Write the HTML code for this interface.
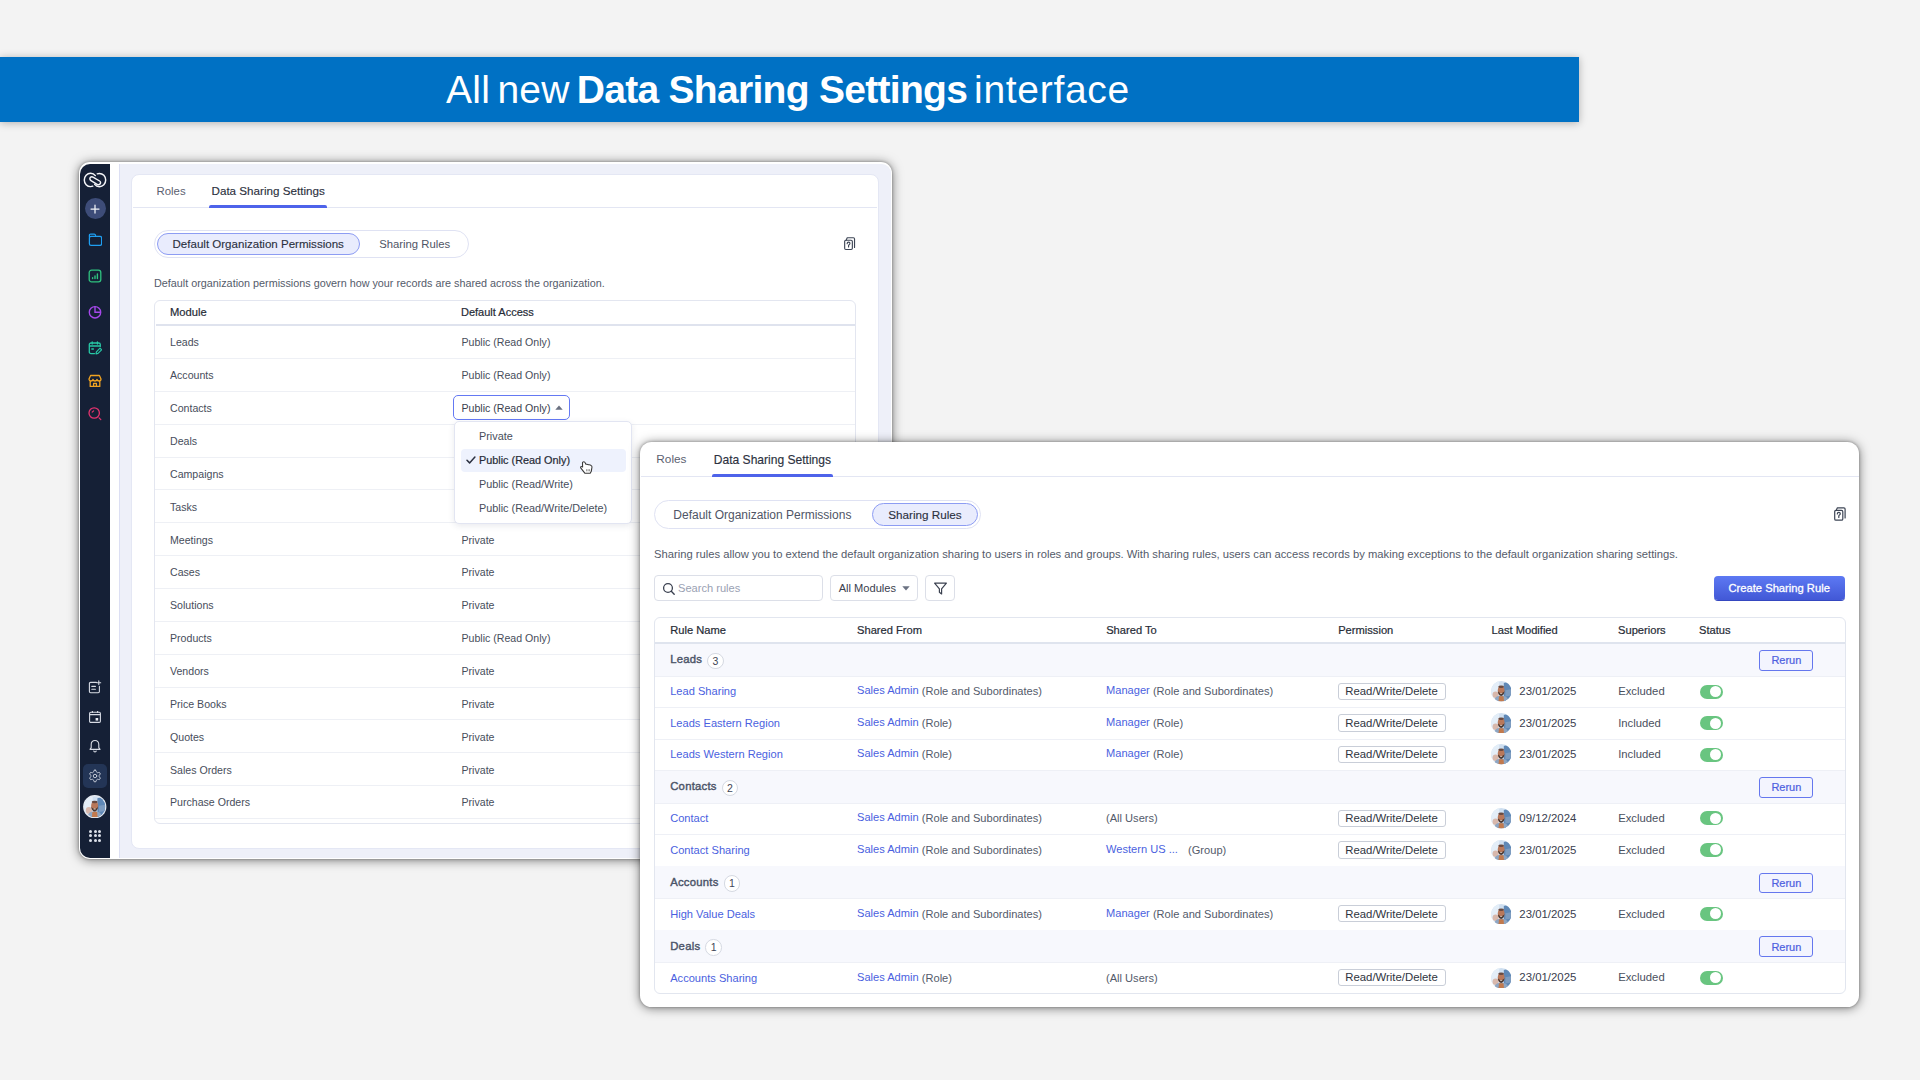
<!DOCTYPE html>
<html><head><meta charset="utf-8"><title>Data Sharing Settings</title>
<style>
html,body{margin:0;padding:0;}
body{width:1920px;height:1080px;overflow:hidden;background:#f3f3f3;position:relative;font-family:"Liberation Sans", sans-serif;}
.t{position:absolute;white-space:nowrap;line-height:1;font-family:"Liberation Sans", sans-serif;}
.b{position:absolute;}
.lk{color:#4a5fe0;position:relative;top:-1px;}
.badge{display:inline-block;box-sizing:border-box;width:16.5px;height:16.5px;border:1px solid #d5d9e2;border-radius:50%;text-align:center;line-height:15.5px;font-size:10.5px;color:#3f4656;-webkit-text-stroke:0;margin:-5px 0 -5px 5px;vertical-align:-1.5px;background:#fff;}
.av{border-radius:50%;background:radial-gradient(circle at 50% 46%, #6b4a36 0 17%, #a0704f 18% 26%, transparent 27%), radial-gradient(ellipse at 50% 95%, #d9d4cf 0 28%, transparent 30%), linear-gradient(135deg,#c7d6e6,#7f9bbb 60%,#e0e6ee);box-shadow:inset 0 0 0 1px rgba(255,255,255,0.35);}
</style></head><body>
<svg width="0" height="0" style="position:absolute"><defs><clipPath id="avc"><circle cx="10" cy="10" r="10"/></clipPath><symbol id="avs" viewBox="0 0 20 20"><g clip-path="url(#avc)"><rect width="20" height="20" fill="#cfdff0"/><rect x="0" y="0" width="8" height="20" fill="#e4eef8"/><path d="M12.5 2 L20 0 V20 H12.5 Z" fill="#5f88b6"/><path d="M14 9 L20 8 V14 L14 15 Z" fill="#7d9cc0"/><ellipse cx="4.5" cy="13.5" rx="3" ry="3.2" fill="#d8b8ac"/><path d="M3 20 C3.5 15.5 6.5 14.5 10 14.5 C13.5 14.5 16.5 15.5 17 20 Z" fill="#8fa6c2"/><path d="M7.3 20 L7.8 14.8 H12.2 L12.7 20 Z" fill="#c27a4e"/><ellipse cx="9.9" cy="9.3" rx="3.3" ry="4.2" fill="#b9785a"/><path d="M6.7 9.8 C7 13 8.3 14.6 9.9 14.6 C11.5 14.6 12.8 13 13.1 9.8 C12.3 11.3 11.3 11.8 9.9 11.8 C8.5 11.8 7.5 11.3 6.7 9.8 Z" fill="#4b3933"/><ellipse cx="9.9" cy="5.6" rx="2.8" ry="1.2" fill="#6a4a40"/><rect x="8.8" y="11.6" width="2.2" height="0.9" rx="0.4" fill="#e8d8cc"/></g></symbol></defs></svg>
<div class="b" style="left:0.00px;top:57.20px;width:1578.50px;height:64.90px;background:#0071c4;box-shadow:0 1px 8px rgba(0,0,0,0.28);"></div>
<div class="t" style="left:446px;top:70.48px;font-size:39px;color:#fff;word-spacing:-4px"><span style="letter-spacing:0.3px">All new</span> <b style="letter-spacing:-0.7px;word-spacing:0">Data Sharing Settings</b> <span style="letter-spacing:0.7px">interface</span></div>
<div class="b" style="left:78.90px;top:162.40px;width:812.80px;height:696.50px;background:#fff;border-radius:11px;box-shadow:0 0 3px rgba(0,0,0,0.32), 0 1px 11px rgba(0,0,0,0.52);"></div>
<div class="b" style="left:80.20px;top:163.80px;width:29.80px;height:694.00px;background:#152036;border-radius:10px 0 0 10px;"></div>
<div class="b" style="left:119.00px;top:164.20px;width:771.40px;height:693.40px;background:#eef0f9;border-left:1px solid #dcdff3;border-radius:0 9px 9px 0;"></div>
<div class="b" style="left:131.00px;top:173.60px;width:748.00px;height:675.40px;background:#fff;border:1px solid #e4e7f4;border-radius:8px;box-sizing:border-box;"></div>
<div class="t" style="left:156.50px;top:185.65px;font-size:11.4px;color:#5b6170;">Roles</div>
<div class="t" style="left:211.50px;top:185.44px;font-size:11.65px;color:#2c3140;-webkit-text-stroke:0.15px #2c3140;">Data Sharing Settings</div>
<div class="b" style="left:132.50px;top:206.80px;width:744.80px;height:1.00px;background:#e3e6f3;"></div>
<div class="b" style="left:209.00px;top:205.20px;width:117.50px;height:2.80px;background:#4e63ea;border-radius:2px 2px 0 0;"></div>
<div class="b" style="left:154.00px;top:230.30px;width:314.70px;height:27.50px;border:1px solid #dfe2f3;border-radius:14px;box-sizing:border-box;background:#fff;"></div>
<div class="b" style="left:157.00px;top:232.80px;width:202.80px;height:22.10px;border:1px solid #8d9cf3;border-radius:12px;box-sizing:border-box;background:#e9ecfd;"></div>
<div class="t" style="left:172.50px;top:238.82px;font-size:11.55px;color:#2b3040;-webkit-text-stroke:0.12px #2b3040;">Default Organization Permissions</div>
<div class="t" style="left:379.20px;top:239.03px;font-size:11.3px;color:#4f5566;">Sharing Rules</div>
<svg class="b" style="left:844.3px;top:237.4px;width:11.399999999999999px;height:13.299999999999999px" viewBox="0 0 12 14"><g fill="none" stroke="#3d4555" stroke-width="1.2" stroke-linecap="round" stroke-linejoin="round"><rect x="0.7" y="3.4" width="8.1" height="9.8" rx="1.3"/><path d="M2.2 3.3 L3.4 0.8 H9.9 Q11.1 0.8 11.1 2 V11"/><path d="M3.3 7 Q3.3 5.4 4.8 5.4 Q6.3 5.4 6.3 6.7 Q6.3 7.6 5.4 8.1 Q4.8 8.5 4.8 9.3 V10.4"/></g></svg>
<div class="t" style="left:154.00px;top:277.66px;font-size:10.8px;color:#545b6a;">Default organization permissions govern how your records are shared across the organization.</div>
<div class="b" style="left:154.00px;top:300.00px;width:702.00px;height:523.80px;border:1px solid #e3e6f0;border-radius:6px;box-sizing:border-box;background:#fff;"></div>
<div class="t" style="left:170.00px;top:306.52px;font-size:11.2px;color:#262b36;-webkit-text-stroke:0.2px #262b36;">Module</div>
<div class="t" style="left:461.00px;top:306.69px;font-size:11.0px;color:#262b36;-webkit-text-stroke:0.2px #262b36;">Default Access</div>
<div class="b" style="left:155.50px;top:324.20px;width:699.20px;height:1.70px;background:#dfe3ee;"></div>
<div class="b" style="left:155.00px;top:357.96px;width:700.00px;height:1.00px;background:#eef0f5;"></div>
<div class="t" style="left:170.00px;top:337.45px;font-size:10.6px;color:#474d5b;">Leads</div>
<div class="t" style="left:461.50px;top:337.45px;font-size:10.6px;color:#474d5b;">Public (Read Only)</div>
<div class="b" style="left:155.00px;top:390.82px;width:700.00px;height:1.00px;background:#eef0f5;"></div>
<div class="t" style="left:170.00px;top:370.31px;font-size:10.6px;color:#474d5b;">Accounts</div>
<div class="t" style="left:461.50px;top:370.31px;font-size:10.6px;color:#474d5b;">Public (Read Only)</div>
<div class="b" style="left:155.00px;top:423.68px;width:700.00px;height:1.00px;background:#eef0f5;"></div>
<div class="t" style="left:170.00px;top:403.17px;font-size:10.6px;color:#474d5b;">Contacts</div>
<div class="b" style="left:155.00px;top:456.54px;width:700.00px;height:1.00px;background:#eef0f5;"></div>
<div class="t" style="left:170.00px;top:436.03px;font-size:10.6px;color:#474d5b;">Deals</div>
<div class="b" style="left:155.00px;top:489.40px;width:700.00px;height:1.00px;background:#eef0f5;"></div>
<div class="t" style="left:170.00px;top:468.89px;font-size:10.6px;color:#474d5b;">Campaigns</div>
<div class="b" style="left:155.00px;top:522.26px;width:700.00px;height:1.00px;background:#eef0f5;"></div>
<div class="t" style="left:170.00px;top:501.75px;font-size:10.6px;color:#474d5b;">Tasks</div>
<div class="b" style="left:155.00px;top:555.12px;width:700.00px;height:1.00px;background:#eef0f5;"></div>
<div class="t" style="left:170.00px;top:534.61px;font-size:10.6px;color:#474d5b;">Meetings</div>
<div class="t" style="left:461.50px;top:534.61px;font-size:10.6px;color:#474d5b;">Private</div>
<div class="b" style="left:155.00px;top:587.98px;width:700.00px;height:1.00px;background:#eef0f5;"></div>
<div class="t" style="left:170.00px;top:567.47px;font-size:10.6px;color:#474d5b;">Cases</div>
<div class="t" style="left:461.50px;top:567.47px;font-size:10.6px;color:#474d5b;">Private</div>
<div class="b" style="left:155.00px;top:620.84px;width:700.00px;height:1.00px;background:#eef0f5;"></div>
<div class="t" style="left:170.00px;top:600.33px;font-size:10.6px;color:#474d5b;">Solutions</div>
<div class="t" style="left:461.50px;top:600.33px;font-size:10.6px;color:#474d5b;">Private</div>
<div class="b" style="left:155.00px;top:653.70px;width:700.00px;height:1.00px;background:#eef0f5;"></div>
<div class="t" style="left:170.00px;top:633.19px;font-size:10.6px;color:#474d5b;">Products</div>
<div class="t" style="left:461.50px;top:633.19px;font-size:10.6px;color:#474d5b;">Public (Read Only)</div>
<div class="b" style="left:155.00px;top:686.56px;width:700.00px;height:1.00px;background:#eef0f5;"></div>
<div class="t" style="left:170.00px;top:666.05px;font-size:10.6px;color:#474d5b;">Vendors</div>
<div class="t" style="left:461.50px;top:666.05px;font-size:10.6px;color:#474d5b;">Private</div>
<div class="b" style="left:155.00px;top:719.42px;width:700.00px;height:1.00px;background:#eef0f5;"></div>
<div class="t" style="left:170.00px;top:698.91px;font-size:10.6px;color:#474d5b;">Price Books</div>
<div class="t" style="left:461.50px;top:698.91px;font-size:10.6px;color:#474d5b;">Private</div>
<div class="b" style="left:155.00px;top:752.28px;width:700.00px;height:1.00px;background:#eef0f5;"></div>
<div class="t" style="left:170.00px;top:731.77px;font-size:10.6px;color:#474d5b;">Quotes</div>
<div class="t" style="left:461.50px;top:731.77px;font-size:10.6px;color:#474d5b;">Private</div>
<div class="b" style="left:155.00px;top:785.14px;width:700.00px;height:1.00px;background:#eef0f5;"></div>
<div class="t" style="left:170.00px;top:764.63px;font-size:10.6px;color:#474d5b;">Sales Orders</div>
<div class="t" style="left:461.50px;top:764.63px;font-size:10.6px;color:#474d5b;">Private</div>
<div class="b" style="left:155.00px;top:818.00px;width:700.00px;height:1.00px;background:#eef0f5;"></div>
<div class="t" style="left:170.00px;top:797.49px;font-size:10.6px;color:#474d5b;">Purchase Orders</div>
<div class="t" style="left:461.50px;top:797.49px;font-size:10.6px;color:#474d5b;">Private</div>
<div class="b" style="left:453.40px;top:395.40px;width:116.60px;height:25.00px;border:1.5px solid #6479f3;border-radius:5px;box-sizing:border-box;background:#fff;"></div>
<div class="t" style="left:461.50px;top:403.02px;font-size:10.6px;color:#3a404e;">Public (Read Only)</div>
<svg class="b" style="left:554.5px;top:404.6px;width:8px;height:5px" viewBox="0 0 8 5"><path d="M0.3 4.7 L4 0.5 L7.7 4.7 Z" fill="#6a7080"/></svg>
<div class="b" style="left:453.90px;top:420.60px;width:178.60px;height:103.60px;border:1px solid #e2e5f2;border-radius:5px;box-sizing:border-box;background:#fff;box-shadow:0 2px 6px rgba(40,50,90,0.10);"></div>
<div class="t" style="left:479.00px;top:430.81px;font-size:10.85px;color:#474d5b;">Private</div>
<div class="b" style="left:460.50px;top:448.60px;width:165.30px;height:23.50px;background:#eef2fd;border-radius:4px;"></div>
<svg class="b" style="left:465.5px;top:456px;width:10px;height:8px" viewBox="0 0 10 8"><path d="M1 4.3 L3.6 6.9 L8.9 1" fill="none" stroke="#2b3040" stroke-width="1.5" stroke-linecap="round" stroke-linejoin="round"/></svg>
<div class="t" style="left:479.00px;top:455.11px;font-size:10.85px;color:#262b36;-webkit-text-stroke:0.2px #262b36;">Public (Read Only)</div>
<div class="t" style="left:479.00px;top:478.81px;font-size:10.85px;color:#474d5b;">Public (Read/Write)</div>
<div class="t" style="left:479.00px;top:502.81px;font-size:10.85px;color:#474d5b;">Public (Read/Write/Delete)</div>
<svg class="b" style="left:579.8px;top:460.5px;width:13px;height:13px" viewBox="0 0 13 13"><path d="M3.8 0.7 C4.5 0.7 5 1.2 5.3 2 L5.9 3.3 C7 3.1 8 3.3 8.6 3.8 C9.6 3.7 10.6 4 11.3 4.6 C11.9 5 12 5.6 11.9 6.4 L11.3 10.3 L10.2 12.2 H4.8 L0.9 7.1 C0.4 6.5 0.6 5.6 1.3 5.5 C1.8 5.4 2.2 5.6 2.6 6 L2.5 2 C2.5 1.2 3 0.7 3.8 0.7 Z" fill="#fff" stroke="#3a3a3a" stroke-width="1.1" stroke-linejoin="round"/><path d="M6.6 8.2 V10.3 M8.1 8.2 V10.3 M9.6 8.2 V10.3" stroke="#777" stroke-width="0.8"/></svg>
<svg class="b" style="left:83px;top:172px;width:24px;height:16px" viewBox="0 0 24 16"><g fill="none" stroke="#f4f5f8" stroke-width="1.45" stroke-linecap="round"><path d="M12.3 3.6 C11.2 2.1 9.5 1.3 7.6 1.3 C4.1 1.3 1.3 4.2 1.3 7.9 C1.3 11.6 4.1 14.6 7.6 14.6 C8.4 14.6 9.1 14.5 9.8 14.2"/><path d="M11.7 12.4 C12.8 13.9 14.5 14.7 16.4 14.7 C19.9 14.7 22.7 11.8 22.7 8.1 C22.7 4.4 19.9 1.4 16.4 1.4 C15.6 1.4 14.9 1.5 14.2 1.8"/><path d="M7.2 5.6 C8 4.8 9.4 4.7 10.4 5.3 L16.6 9 C17.6 9.6 17.9 10.9 17.2 11.8 C16.5 12.7 15.1 12.9 14.1 12.3 L8 8.6 C7 8 6.5 6.5 7.2 5.6 Z"/></g></svg>
<div class="b" style="left:84.8px;top:198.4px;width:20.8px;height:20.8px;border-radius:50%;background:#3d4c78;"></div>
<svg class="b" style="left:89.2px;top:203px;width:12px;height:12px" viewBox="0 0 12 12"><path d="M6 2 V10 M2 6 H10" stroke="#f2f4f8" stroke-width="1.25" stroke-linecap="round"/></svg>
<svg class="b" style="left:88px;top:233px;width:14px;height:14px" viewBox="0 0 14 14"><g fill="none" stroke="#1f9ff2" stroke-width="1.25" stroke-linejoin="round"><rect x="1.4" y="3.4" width="12.2" height="9" rx="1.6"/><path d="M1.4 4.6 V2.4 C1.4 1.6 1.8 1.1 2.6 1.1 H6.4 C7.1 1.1 7.6 1.6 7.7 3.4"/></g></svg>
<svg class="b" style="left:88.0px;top:269.0px;width:14px;height:14px" viewBox="0 0 14 14"><rect x="1.2" y="1.2" width="11.6" height="11.6" rx="2.4" fill="none" stroke="#2fc27f" stroke-width="1.3"/><path d="M4.6 9.6 V8.8 M7 9.6 V7 M9.4 9.6 V5" stroke="#2fc27f" stroke-width="1.4" stroke-linecap="round"/></svg>
<svg class="b" style="left:88.0px;top:304.5px;width:14px;height:14px" viewBox="0 0 14 14"><circle cx="7" cy="7.3" r="5.7" fill="none" stroke="#a648ea" stroke-width="1.4"/><path d="M7 1.6 V7.3 H12.7" fill="none" stroke="#a648ea" stroke-width="1.4"/></svg>
<svg class="b" style="left:88.0px;top:340.5px;width:14px;height:14px" viewBox="0 0 14 14"><path d="M6.5 12.6 H3 C2 12.6 1.3 11.9 1.3 10.9 V3.6 C1.3 2.7 2 2 3 2 H10.6 C11.6 2 12.3 2.7 12.3 3.6 V5.6 M1.3 5 H12.3 M4.2 0.8 V3 M9.4 0.8 V3 M3.8 8 H5.4" fill="none" stroke="#27c6a4" stroke-width="1.3" stroke-linecap="round"/><path d="M8 12.8 L8.4 10.8 L12 7.2 L13.6 8.8 L10 12.4 Z" fill="none" stroke="#27c6a4" stroke-width="1.2" stroke-linejoin="round"/></svg>
<svg class="b" style="left:88.0px;top:374.0px;width:14px;height:14px" viewBox="0 0 14 14"><path d="M2.6 1.5 H11.4 L13 5 C13 6.2 12 7 11 7 C10.1 7 9.2 6.3 9 5.5 C8.8 6.3 8 7 7 7 C6 7 5.2 6.3 5 5.5 C4.8 6.3 3.9 7 3 7 C2 7 1 6.2 1 5 Z M2.2 6.6 V12.4 H11.8 V6.6 M5.6 12.4 V9.4 H8.4 V12.4" fill="none" stroke="#f1a321" stroke-width="1.3" stroke-linejoin="round"/></svg>
<svg class="b" style="left:88.0px;top:407.0px;width:14px;height:14px" viewBox="0 0 14 14"><circle cx="6.2" cy="6" r="5.2" fill="none" stroke="#e3336f" stroke-width="1.3"/><path d="M11.1 10.9 L12.8 12.6" stroke="#e3336f" stroke-width="1.3" stroke-linecap="round"/><path d="M4.2 5.2 L5.6 3.8" stroke="#e3336f" stroke-width="1.2" stroke-linecap="round"/></svg>
<svg class="b" style="left:88.0px;top:679.5px;width:14px;height:14px" viewBox="0 0 14 14"><path d="M8.4 2.4 H2.6 C1.9 2.4 1.4 2.9 1.4 3.6 V11.6 C1.4 12.3 1.9 12.8 2.6 12.8 H10.2 C10.9 12.8 11.4 12.3 11.4 11.6 V6.4 M3.8 6.4 H7.4 M3.8 9.2 H7.4 M10.8 0.8 V4.6 M8.9 2.7 H12.7" fill="none" stroke="#d7dbe4" stroke-width="1.1" stroke-linecap="round"/></svg>
<svg class="b" style="left:88.0px;top:709.5px;width:14px;height:14px" viewBox="0 0 14 14"><rect x="1.6" y="2.2" width="10.8" height="10.2" rx="1.2" fill="none" stroke="#d7dbe4" stroke-width="1.1"/><path d="M1.6 4.6 H12.4 M4.4 0.9 V3 M9.6 0.9 V3" stroke="#d7dbe4" stroke-width="1.1"/><rect x="7.6" y="8" width="2.6" height="2.6" fill="#e8ebf2"/></svg>
<svg class="b" style="left:88.0px;top:739.0px;width:14px;height:14px" viewBox="0 0 14 14"><path d="M7 1.5 C4.6 1.5 3.2 3.3 3.2 5.6 V8.6 L2 10.4 H12 L10.8 8.6 V5.6 C10.8 3.3 9.4 1.5 7 1.5 Z M5.6 11.6 C5.8 12.5 6.3 12.9 7 12.9 C7.7 12.9 8.2 12.5 8.4 11.6" fill="none" stroke="#d7dbe4" stroke-width="1.1" stroke-linejoin="round"/></svg>
<div class="b" style="left:83px;top:764px;width:24px;height:24px;border-radius:5px;background:#233556;"></div>
<svg class="b" style="left:88px;top:769px;width:14px;height:14px" viewBox="0 0 24 24"><g fill="none" stroke="#c5cbd8" stroke-width="1.7" stroke-linecap="round" stroke-linejoin="round"><path d="M12.22 2h-.44a2 2 0 0 0-2 2v.18a2 2 0 0 1-1 1.73l-.43.25a2 2 0 0 1-2 0l-.15-.08a2 2 0 0 0-2.73.73l-.22.38a2 2 0 0 0 .73 2.73l.15.1a2 2 0 0 1 1 1.72v.51a2 2 0 0 1-1 1.74l-.15.09a2 2 0 0 0-.73 2.73l.22.38a2 2 0 0 0 2.73.73l.15-.08a2 2 0 0 1 2 0l.43.25a2 2 0 0 1 1 1.73V20a2 2 0 0 0 2 2h.44a2 2 0 0 0 2-2v-.18a2 2 0 0 1 1-1.73l.43-.25a2 2 0 0 1 2 0l.15.08a2 2 0 0 0 2.73-.73l.22-.39a2 2 0 0 0-.73-2.730l-.15-.08a2 2 0 0 1-1-1.74v-.5a2 2 0 0 1 1-1.74l.15-.09a2 2 0 0 0 .73-2.73l-.22-.38a2 2 0 0 0-2.73-.73l-.15.08a2 2 0 0 1-2 0l-.43-.25a2 2 0 0 1-1-1.73V4a2 2 0 0 0-2-2z"/><circle cx="12" cy="12" r="3"/></g></svg>
<svg class="b" style="left:83.2px;top:794.5px;width:23.5px;height:23.5px" viewBox="0 0 20 20"><circle cx="10" cy="10" r="9.9" fill="#e8ecf2"/><g transform="translate(10 10) scale(0.9) translate(-10 -10)"><use href="#avs"/></g></svg>
<div class="b" style="left:89.2px;top:829.9px;width:3px;height:3px;border-radius:50%;background:#dde1ea;"></div>
<div class="b" style="left:93.75px;top:829.9px;width:3px;height:3px;border-radius:50%;background:#dde1ea;"></div>
<div class="b" style="left:98.3px;top:829.9px;width:3px;height:3px;border-radius:50%;background:#dde1ea;"></div>
<div class="b" style="left:89.2px;top:834.4px;width:3px;height:3px;border-radius:50%;background:#dde1ea;"></div>
<div class="b" style="left:93.75px;top:834.4px;width:3px;height:3px;border-radius:50%;background:#dde1ea;"></div>
<div class="b" style="left:98.3px;top:834.4px;width:3px;height:3px;border-radius:50%;background:#dde1ea;"></div>
<div class="b" style="left:89.2px;top:838.9px;width:3px;height:3px;border-radius:50%;background:#dde1ea;"></div>
<div class="b" style="left:93.75px;top:838.9px;width:3px;height:3px;border-radius:50%;background:#dde1ea;"></div>
<div class="b" style="left:98.3px;top:838.9px;width:3px;height:3px;border-radius:50%;background:#dde1ea;"></div>
<div class="b" style="left:640.00px;top:441.80px;width:1219.20px;height:565.40px;background:#fff;border-radius:11.5px;box-shadow:0 0 3px rgba(0,0,0,0.32), 0 1px 11px rgba(0,0,0,0.52);"></div>
<div class="t" style="left:656.30px;top:454.21px;font-size:11.8px;color:#5b6170;">Roles</div>
<div class="t" style="left:713.80px;top:454.00px;font-size:12.05px;color:#2c3140;-webkit-text-stroke:0.15px #2c3140;">Data Sharing Settings</div>
<div class="b" style="left:641.00px;top:475.80px;width:1217.50px;height:1.00px;background:#e3e6f3;"></div>
<div class="b" style="left:711.50px;top:474.10px;width:121.50px;height:2.80px;background:#4e63ea;border-radius:2px 2px 0 0;"></div>
<div class="b" style="left:654.00px;top:499.80px;width:327.00px;height:29.00px;border:1px solid #dfe2f3;border-radius:15px;box-sizing:border-box;background:#fff;"></div>
<div class="b" style="left:872.20px;top:502.80px;width:106.30px;height:23.10px;border:1px solid #8d9cf3;border-radius:12px;box-sizing:border-box;background:#e9ecfd;"></div>
<div class="t" style="left:673.30px;top:508.64px;font-size:12.0px;color:#4f5566;">Default Organization Permissions</div>
<div class="t" style="left:888.30px;top:508.89px;font-size:11.7px;color:#2b3040;-webkit-text-stroke:0.12px #2b3040;">Sharing Rules</div>
<svg class="b" style="left:1833.8px;top:507.3px;width:12.0px;height:14.0px" viewBox="0 0 12 14"><g fill="none" stroke="#3d4555" stroke-width="1.2" stroke-linecap="round" stroke-linejoin="round"><rect x="0.7" y="3.4" width="8.1" height="9.8" rx="1.3"/><path d="M2.2 3.3 L3.4 0.8 H9.9 Q11.1 0.8 11.1 2 V11"/><path d="M3.3 7 Q3.3 5.4 4.8 5.4 Q6.3 5.4 6.3 6.7 Q6.3 7.6 5.4 8.1 Q4.8 8.5 4.8 9.3 V10.4"/></g></svg>
<div class="t" style="left:654.00px;top:548.80px;font-size:11.22px;color:#545b6a;">Sharing rules allow you to extend the default organization sharing to users in roles and groups. With sharing rules, users can access records by making exceptions to the default organization sharing settings.</div>
<div class="b" style="left:654.00px;top:575.00px;width:168.80px;height:26.20px;border:1px solid #dcdfe8;border-radius:4px;box-sizing:border-box;background:#fff;"></div>
<svg class="b" style="left:661.5px;top:581.5px;width:14px;height:14px" viewBox="0 0 14 14"><circle cx="6" cy="6" r="4.4" fill="none" stroke="#3b4150" stroke-width="1.3"/><path d="M9.3 9.3 L12.2 12.2" stroke="#3b4150" stroke-width="1.4" stroke-linecap="round"/></svg>
<div class="t" style="left:678.00px;top:582.50px;font-size:11.1px;color:#9aa1b3;">Search rules</div>
<div class="b" style="left:830.40px;top:575.00px;width:87.20px;height:26.20px;border:1px solid #dcdfe8;border-radius:4px;box-sizing:border-box;background:#fff;"></div>
<div class="t" style="left:838.70px;top:582.50px;font-size:11.1px;color:#3a404e;">All Modules</div>
<svg class="b" style="left:902.3px;top:585.8px;width:8px;height:5px" viewBox="0 0 8 5"><path d="M0.3 0.3 L4 4.6 L7.7 0.3 Z" fill="#6b7282"/></svg>
<div class="b" style="left:925.20px;top:575.00px;width:29.60px;height:26.20px;border:1px solid #dcdfe8;border-radius:4px;box-sizing:border-box;background:#fff;"></div>
<svg class="b" style="left:932.5px;top:580.5px;width:15px;height:15px" viewBox="0 0 15 15"><path d="M1.6 2.2 H13.4 L8.6 7.8 V13 L6.4 11.2 V7.8 Z" fill="none" stroke="#3b4150" stroke-width="1.2" stroke-linejoin="round"/></svg>
<div class="b" style="left:1713.80px;top:575.80px;width:131.40px;height:24.60px;background:linear-gradient(#5d79f3,#4258d6);border-radius:4px;box-shadow:0 1px 0 #3548c0;"></div>
<div class="t" style="left:1728.50px;top:583.12px;font-size:11.2px;color:#fff;-webkit-text-stroke:0.3px #fff;">Create Sharing Rule</div>
<div class="b" style="left:654.00px;top:616.80px;width:1192.00px;height:377.20px;border:1px solid #e2e6ef;border-radius:6px;box-sizing:border-box;background:#fff;"></div>
<div class="t" style="left:670.20px;top:624.56px;font-size:11.15px;color:#262b36;-webkit-text-stroke:0.2px #262b36;">Rule Name</div>
<div class="t" style="left:857.00px;top:624.56px;font-size:11.15px;color:#262b36;-webkit-text-stroke:0.2px #262b36;">Shared From</div>
<div class="t" style="left:1106.20px;top:624.56px;font-size:11.15px;color:#262b36;-webkit-text-stroke:0.2px #262b36;">Shared To</div>
<div class="t" style="left:1338.20px;top:624.56px;font-size:11.15px;color:#262b36;-webkit-text-stroke:0.2px #262b36;">Permission</div>
<div class="t" style="left:1491.50px;top:624.56px;font-size:11.15px;color:#262b36;-webkit-text-stroke:0.2px #262b36;">Last Modified</div>
<div class="t" style="left:1618.00px;top:624.56px;font-size:11.15px;color:#262b36;-webkit-text-stroke:0.2px #262b36;">Superiors</div>
<div class="t" style="left:1699.00px;top:624.56px;font-size:11.15px;color:#262b36;-webkit-text-stroke:0.2px #262b36;">Status</div>
<div class="b" style="left:655.00px;top:642.00px;width:1190.00px;height:1.80px;background:#dfe4ee;"></div>
<div class="b" style="left:655.00px;top:643.80px;width:1190.00px;height:32.40px;background:#f7f8fd;"></div>
<div class="t" style="left:670.20px;top:654.33px;font-size:11.3px;color:#4b5468;-webkit-text-stroke:0.4px #4b5468;"><span style="letter-spacing:0.25px">Leads</span><span class="badge">3</span></div>
<div class="b" style="left:1759.30px;top:650.20px;width:53.30px;height:20.80px;border:1px solid #6577ee;border-radius:3px;box-sizing:border-box;background:#f3f4fe;"></div>
<div class="t" style="left:1771.40px;top:655.49px;font-size:11.0px;color:#4d60e0;-webkit-text-stroke:0.2px #4d60e0;">Rerun</div>
<div class="b" style="left:655.00px;top:675.70px;width:1190.00px;height:1.00px;background:#eef0f6;"></div>
<div class="t" style="left:670.20px;top:686.45px;font-size:11.1px;color:#4a5fe0;">Lead Sharing</div>
<div class="t" style="left:857.00px;top:686.45px;font-size:11.1px;color:#535a6a;"><span class="lk">Sales Admin</span> (Role and Subordinates)</div>
<div class="t" style="left:1106.00px;top:686.45px;font-size:11.1px;color:#535a6a;"><span class="lk">Manager</span> (Role and Subordinates)</div>
<div class="b" style="left:1338.00px;top:682.95px;width:107.60px;height:17.20px;border:1px solid #c9ced8;border-radius:3px;box-sizing:border-box;background:#fff;"></div>
<div class="t" style="left:1345.30px;top:686.24px;font-size:11.35px;color:#2f3441;">Read/Write/Delete</div>
<svg class="b" style="left:1490.95px;top:681.30px;width:20.5px;height:20.5px" viewBox="0 0 20 20"><use href="#avs"/></svg>
<div class="t" style="left:1519.30px;top:686.20px;font-size:11.4px;color:#3a404e;">23/01/2025</div>
<div class="t" style="left:1618.20px;top:686.28px;font-size:11.3px;color:#4a505e;">Excluded</div>
<div class="b" style="left:1699.50px;top:684.55px;width:23.50px;height:14.00px;background:#69c580;border-radius:7px;"></div>
<div class="b" style="left:1710.4px;top:686.05px;width:11px;height:11px;border-radius:50%;background:#fff;"></div>
<div class="b" style="left:655.00px;top:707.20px;width:1190.00px;height:1.00px;background:#eef0f6;"></div>
<div class="t" style="left:670.20px;top:717.95px;font-size:11.1px;color:#4a5fe0;">Leads Eastern Region</div>
<div class="t" style="left:857.00px;top:717.95px;font-size:11.1px;color:#535a6a;"><span class="lk">Sales Admin</span> (Role)</div>
<div class="t" style="left:1106.00px;top:717.95px;font-size:11.1px;color:#535a6a;"><span class="lk">Manager</span> (Role)</div>
<div class="b" style="left:1338.00px;top:714.45px;width:107.60px;height:17.20px;border:1px solid #c9ced8;border-radius:3px;box-sizing:border-box;background:#fff;"></div>
<div class="t" style="left:1345.30px;top:717.74px;font-size:11.35px;color:#2f3441;">Read/Write/Delete</div>
<svg class="b" style="left:1490.95px;top:712.80px;width:20.5px;height:20.5px" viewBox="0 0 20 20"><use href="#avs"/></svg>
<div class="t" style="left:1519.30px;top:717.70px;font-size:11.4px;color:#3a404e;">23/01/2025</div>
<div class="t" style="left:1618.20px;top:717.78px;font-size:11.3px;color:#4a505e;">Included</div>
<div class="b" style="left:1699.50px;top:716.05px;width:23.50px;height:14.00px;background:#69c580;border-radius:7px;"></div>
<div class="b" style="left:1710.4px;top:717.55px;width:11px;height:11px;border-radius:50%;background:#fff;"></div>
<div class="b" style="left:655.00px;top:738.70px;width:1190.00px;height:1.00px;background:#eef0f6;"></div>
<div class="t" style="left:670.20px;top:749.45px;font-size:11.1px;color:#4a5fe0;">Leads Western Region</div>
<div class="t" style="left:857.00px;top:749.45px;font-size:11.1px;color:#535a6a;"><span class="lk">Sales Admin</span> (Role)</div>
<div class="t" style="left:1106.00px;top:749.45px;font-size:11.1px;color:#535a6a;"><span class="lk">Manager</span> (Role)</div>
<div class="b" style="left:1338.00px;top:745.95px;width:107.60px;height:17.20px;border:1px solid #c9ced8;border-radius:3px;box-sizing:border-box;background:#fff;"></div>
<div class="t" style="left:1345.30px;top:749.24px;font-size:11.35px;color:#2f3441;">Read/Write/Delete</div>
<svg class="b" style="left:1490.95px;top:744.30px;width:20.5px;height:20.5px" viewBox="0 0 20 20"><use href="#avs"/></svg>
<div class="t" style="left:1519.30px;top:749.20px;font-size:11.4px;color:#3a404e;">23/01/2025</div>
<div class="t" style="left:1618.20px;top:749.28px;font-size:11.3px;color:#4a505e;">Included</div>
<div class="b" style="left:1699.50px;top:747.55px;width:23.50px;height:14.00px;background:#69c580;border-radius:7px;"></div>
<div class="b" style="left:1710.4px;top:749.05px;width:11px;height:11px;border-radius:50%;background:#fff;"></div>
<div class="b" style="left:655.00px;top:770.20px;width:1190.00px;height:1.00px;background:#eef0f6;"></div>
<div class="b" style="left:655.00px;top:770.70px;width:1190.00px;height:32.40px;background:#f7f8fd;"></div>
<div class="t" style="left:670.20px;top:781.23px;font-size:11.3px;color:#4b5468;-webkit-text-stroke:0.4px #4b5468;"><span style="letter-spacing:0.25px">Contacts</span><span class="badge">2</span></div>
<div class="b" style="left:1759.30px;top:777.10px;width:53.30px;height:20.80px;border:1px solid #6577ee;border-radius:3px;box-sizing:border-box;background:#f3f4fe;"></div>
<div class="t" style="left:1771.40px;top:782.39px;font-size:11.0px;color:#4d60e0;-webkit-text-stroke:0.2px #4d60e0;">Rerun</div>
<div class="b" style="left:655.00px;top:802.60px;width:1190.00px;height:1.00px;background:#eef0f6;"></div>
<div class="t" style="left:670.20px;top:813.35px;font-size:11.1px;color:#4a5fe0;">Contact</div>
<div class="t" style="left:857.00px;top:813.35px;font-size:11.1px;color:#535a6a;"><span class="lk">Sales Admin</span> (Role and Subordinates)</div>
<div class="t" style="left:1106.00px;top:813.35px;font-size:11.1px;color:#535a6a;">(All Users)</div>
<div class="b" style="left:1338.00px;top:809.85px;width:107.60px;height:17.20px;border:1px solid #c9ced8;border-radius:3px;box-sizing:border-box;background:#fff;"></div>
<div class="t" style="left:1345.30px;top:813.14px;font-size:11.35px;color:#2f3441;">Read/Write/Delete</div>
<svg class="b" style="left:1490.95px;top:808.20px;width:20.5px;height:20.5px" viewBox="0 0 20 20"><use href="#avs"/></svg>
<div class="t" style="left:1519.30px;top:813.10px;font-size:11.4px;color:#3a404e;">09/12/2024</div>
<div class="t" style="left:1618.20px;top:813.18px;font-size:11.3px;color:#4a505e;">Excluded</div>
<div class="b" style="left:1699.50px;top:811.45px;width:23.50px;height:14.00px;background:#69c580;border-radius:7px;"></div>
<div class="b" style="left:1710.4px;top:812.95px;width:11px;height:11px;border-radius:50%;background:#fff;"></div>
<div class="b" style="left:655.00px;top:834.10px;width:1190.00px;height:1.00px;background:#eef0f6;"></div>
<div class="t" style="left:670.20px;top:844.85px;font-size:11.1px;color:#4a5fe0;">Contact Sharing</div>
<div class="t" style="left:857.00px;top:844.85px;font-size:11.1px;color:#535a6a;"><span class="lk">Sales Admin</span> (Role and Subordinates)</div>
<div class="t" style="left:1106.00px;top:844.85px;font-size:11.1px;color:#535a6a;"><span class="lk">Western US ...</span> <span style="margin-left:7px"></span>(Group)</div>
<div class="b" style="left:1338.00px;top:841.35px;width:107.60px;height:17.20px;border:1px solid #c9ced8;border-radius:3px;box-sizing:border-box;background:#fff;"></div>
<div class="t" style="left:1345.30px;top:844.64px;font-size:11.35px;color:#2f3441;">Read/Write/Delete</div>
<svg class="b" style="left:1490.95px;top:839.70px;width:20.5px;height:20.5px" viewBox="0 0 20 20"><use href="#avs"/></svg>
<div class="t" style="left:1519.30px;top:844.60px;font-size:11.4px;color:#3a404e;">23/01/2025</div>
<div class="t" style="left:1618.20px;top:844.68px;font-size:11.3px;color:#4a505e;">Excluded</div>
<div class="b" style="left:1699.50px;top:842.95px;width:23.50px;height:14.00px;background:#69c580;border-radius:7px;"></div>
<div class="b" style="left:1710.4px;top:844.45px;width:11px;height:11px;border-radius:50%;background:#fff;"></div>
<div class="b" style="left:655.00px;top:865.60px;width:1190.00px;height:1.00px;background:#eef0f6;"></div>
<div class="b" style="left:655.00px;top:866.10px;width:1190.00px;height:32.40px;background:#f7f8fd;"></div>
<div class="t" style="left:670.20px;top:876.63px;font-size:11.3px;color:#4b5468;-webkit-text-stroke:0.4px #4b5468;"><span style="letter-spacing:0.25px">Accounts</span><span class="badge">1</span></div>
<div class="b" style="left:1759.30px;top:872.50px;width:53.30px;height:20.80px;border:1px solid #6577ee;border-radius:3px;box-sizing:border-box;background:#f3f4fe;"></div>
<div class="t" style="left:1771.40px;top:877.79px;font-size:11.0px;color:#4d60e0;-webkit-text-stroke:0.2px #4d60e0;">Rerun</div>
<div class="b" style="left:655.00px;top:898.00px;width:1190.00px;height:1.00px;background:#eef0f6;"></div>
<div class="t" style="left:670.20px;top:908.75px;font-size:11.1px;color:#4a5fe0;">High Value Deals</div>
<div class="t" style="left:857.00px;top:908.75px;font-size:11.1px;color:#535a6a;"><span class="lk">Sales Admin</span> (Role and Subordinates)</div>
<div class="t" style="left:1106.00px;top:908.75px;font-size:11.1px;color:#535a6a;"><span class="lk">Manager</span> (Role and Subordinates)</div>
<div class="b" style="left:1338.00px;top:905.25px;width:107.60px;height:17.20px;border:1px solid #c9ced8;border-radius:3px;box-sizing:border-box;background:#fff;"></div>
<div class="t" style="left:1345.30px;top:908.54px;font-size:11.35px;color:#2f3441;">Read/Write/Delete</div>
<svg class="b" style="left:1490.95px;top:903.60px;width:20.5px;height:20.5px" viewBox="0 0 20 20"><use href="#avs"/></svg>
<div class="t" style="left:1519.30px;top:908.50px;font-size:11.4px;color:#3a404e;">23/01/2025</div>
<div class="t" style="left:1618.20px;top:908.58px;font-size:11.3px;color:#4a505e;">Excluded</div>
<div class="b" style="left:1699.50px;top:906.85px;width:23.50px;height:14.00px;background:#69c580;border-radius:7px;"></div>
<div class="b" style="left:1710.4px;top:908.35px;width:11px;height:11px;border-radius:50%;background:#fff;"></div>
<div class="b" style="left:655.00px;top:929.50px;width:1190.00px;height:1.00px;background:#eef0f6;"></div>
<div class="b" style="left:655.00px;top:930.00px;width:1190.00px;height:32.40px;background:#f7f8fd;"></div>
<div class="t" style="left:670.20px;top:940.53px;font-size:11.3px;color:#4b5468;-webkit-text-stroke:0.4px #4b5468;"><span style="letter-spacing:0.25px">Deals</span><span class="badge">1</span></div>
<div class="b" style="left:1759.30px;top:936.40px;width:53.30px;height:20.80px;border:1px solid #6577ee;border-radius:3px;box-sizing:border-box;background:#f3f4fe;"></div>
<div class="t" style="left:1771.40px;top:941.69px;font-size:11.0px;color:#4d60e0;-webkit-text-stroke:0.2px #4d60e0;">Rerun</div>
<div class="b" style="left:655.00px;top:961.90px;width:1190.00px;height:1.00px;background:#eef0f6;"></div>
<div class="t" style="left:670.20px;top:972.65px;font-size:11.1px;color:#4a5fe0;">Accounts Sharing</div>
<div class="t" style="left:857.00px;top:972.65px;font-size:11.1px;color:#535a6a;"><span class="lk">Sales Admin</span> (Role)</div>
<div class="t" style="left:1106.00px;top:972.65px;font-size:11.1px;color:#535a6a;">(All Users)</div>
<div class="b" style="left:1338.00px;top:969.15px;width:107.60px;height:17.20px;border:1px solid #c9ced8;border-radius:3px;box-sizing:border-box;background:#fff;"></div>
<div class="t" style="left:1345.30px;top:972.44px;font-size:11.35px;color:#2f3441;">Read/Write/Delete</div>
<svg class="b" style="left:1490.95px;top:967.50px;width:20.5px;height:20.5px" viewBox="0 0 20 20"><use href="#avs"/></svg>
<div class="t" style="left:1519.30px;top:972.40px;font-size:11.4px;color:#3a404e;">23/01/2025</div>
<div class="t" style="left:1618.20px;top:972.48px;font-size:11.3px;color:#4a505e;">Excluded</div>
<div class="b" style="left:1699.50px;top:970.75px;width:23.50px;height:14.00px;background:#69c580;border-radius:7px;"></div>
<div class="b" style="left:1710.4px;top:972.25px;width:11px;height:11px;border-radius:50%;background:#fff;"></div>
</body></html>
